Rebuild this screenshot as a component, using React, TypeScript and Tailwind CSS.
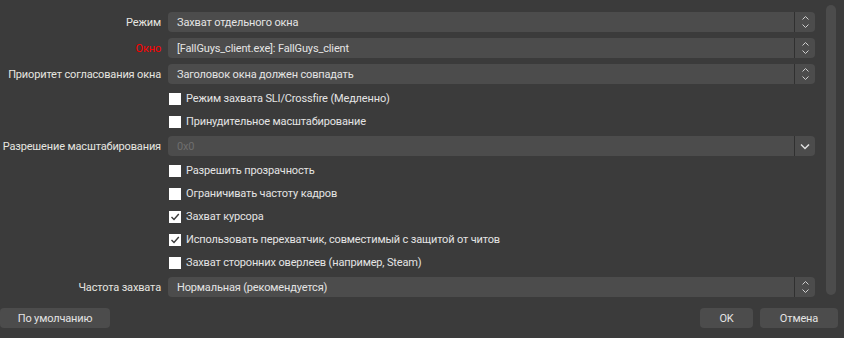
import React from "react";

const Spin = () => (
  <svg width="9" height="14" viewBox="0 0 9 14" className="block">
    <path d="M1.5 4.5 L4.5 1.5 L7.5 4.5" fill="none" stroke="#cfcfcf" strokeWidth="1" />
    <path d="M1.5 9.5 L4.5 12.5 L7.5 9.5" fill="none" stroke="#cfcfcf" strokeWidth="1" />
  </svg>
);

const Down = () => (
  <svg width="10" height="7" viewBox="0 0 10 7" className="block">
    <path d="M1 1.5 L5 5.5 L9 1.5" fill="none" stroke="#e0e0e0" strokeWidth="1.5" />
  </svg>
);

function Combo({ text, disabled, editable }: { text: string; disabled?: boolean; editable?: boolean }) {
  return (
    <div className="flex h-5 rounded-[4px] bg-[#4c4c4c]">
      <div className={"flex flex-1 items-center whitespace-nowrap pl-[9px] " + (disabled ? "text-[#6e6e6e]" : "text-[#e4e4e4]")}>{text}</div>
      <div className="w-px bg-[#303030]" />
      <div className="flex w-5 items-center justify-center">{editable ? <Down /> : <Spin />}</div>
    </div>
  );
}

function Check({ text, checked }: { text: string; checked?: boolean }) {
  return (
    <div className="col-start-2 flex h-[17px] items-center gap-[5px]">
      <div className="ml-[1px] flex h-3 w-3 items-center justify-center bg-white">
        {checked && (
          <svg width="10" height="10" viewBox="0 0 10 10">
            <path d="M1.5 5 L4 7.5 L8.8 2" fill="none" stroke="#3a3a3a" strokeWidth="1.4" />
          </svg>
        )}
      </div>
      <span className="whitespace-nowrap text-[#e4e4e4]">{text}</span>
    </div>
  );
}

function Label({ text, red }: { text: string; red?: boolean }) {
  return (
    <div className={"flex h-5 items-center justify-end whitespace-nowrap " + (red ? "text-[#ff0000]" : "text-[#e6e6e0]")}>
      {text}
    </div>
  );
}

export default function App() {
  return (
    <div
      className="relative flex h-[338px] w-[844px] flex-col bg-[#3b3b3b] text-[11px] leading-none tracking-[-0.15px]"
      style={{ fontFamily: 'Roboto, "Noto Sans", sans-serif' }}
    >
      <div className="flex flex-1">
        <div className="flex-1 pl-2 pr-[29px] pt-3">
          <div className="grid grid-cols-[153px_1fr] gap-x-[7px] gap-y-[6px]">
            <Label text="Режим" />
            <Combo text="Захват отдельного окна" />
            <Label text="Окно" red />
            <Combo text="[FallGuys_client.exe]: FallGuys_client" />
            <Label text="Приоритет согласования окна" />
            <Combo text="Заголовок окна должен совпадать" />
            <Check text="Режим захвата SLI/Crossfire (Медленно)" />
            <Check text="Принудительное масштабирование" />
            <Label text="Разрешение масштабирования" />
            <Combo text="0x0" disabled editable />
            <Check text="Разрешить прозрачность" />
            <Check text="Ограничивать частоту кадров" />
            <Check text="Захват курсора" checked />
            <Check text="Использовать перехватчик, совместимый с защитой от читов" checked />
            <Check text="Захват сторонних оверлеев (например, Steam)" />
            <Label text="Частота захвата" />
            <Combo text="Нормальная (рекомендуется)" />
          </div>
        </div>
      </div>
      <div className="absolute right-2 top-[5px] h-[290px] w-[10px] rounded-full bg-[#4c4c4c]" />
      <div className="flex items-center pb-[10px]">
        <button className="h-5 w-[110px] rounded-[4px] bg-[#4c4c4c] text-[#e4e4e4]">По умолчанию</button>
        <div className="flex-1" />
        <button className="h-5 w-[53px] rounded-[4px] bg-[#4c4c4c] text-[#e4e4e4]">OK</button>
        <button className="ml-[7px] mr-[6px] h-5 w-[78px] rounded-[4px] bg-[#4c4c4c] text-[#e4e4e4]">Отмена</button>
      </div>
    </div>
  );
}
